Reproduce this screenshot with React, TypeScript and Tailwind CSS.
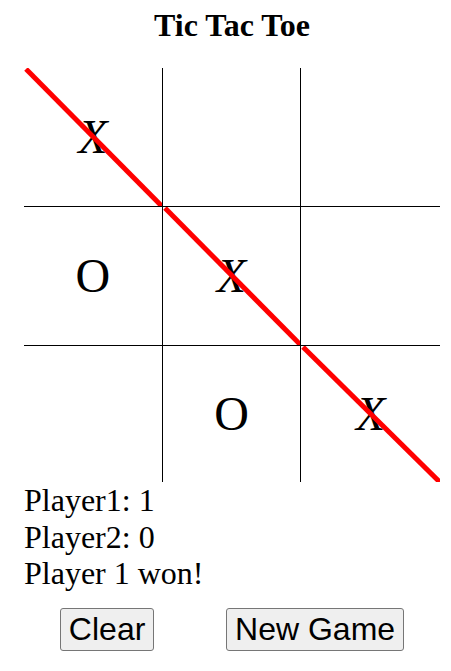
import React from "react";

const board = ["X", "", "", "O", "X", "", "", "O", "X"];
const winLine = [0, 4, 8];

function Cell({ value, index }: { value: string; index: number }) {
  const col = index % 3;
  const row = Math.floor(index / 3);
  const borders = [
    col < 2 ? "border-r border-black" : "",
    row < 2 ? "border-b border-black" : "",
  ].join(" ");
  return (
    <div className={`relative flex items-center justify-center ${borders}`}>
      <span className={`text-[48px] leading-none ${value === "X" ? "italic" : ""}`}>
        {value}
      </span>
      {winLine.includes(index) && (
        <svg className="absolute inset-0 h-full w-full" preserveAspectRatio="none">
          <line x1="2" y1="1" x2="100%" y2="100%" stroke="#ff0000" strokeWidth="5" />
        </svg>
      )}
    </div>
  );
}

export default function App() {
  return (
    <div className="min-h-[671px] bg-white text-black" style={{ fontFamily: '"Liberation Serif", "Times New Roman", serif' }}>
      <div className="ml-[24px] w-[416px] pt-[7px]">
        <h1 className="text-center text-[32px] font-bold leading-[1.15]">Tic Tac Toe</h1>
        <div className="mt-[24px] grid grid-cols-3 grid-rows-[139px_139px_136px]">
          {board.map((v, i) => (
            <Cell key={i} value={v} index={i} />
          ))}
        </div>
        <div className="text-[32px] leading-[1.15]">
          <div>Player1: 1</div>
          <div>Player2: 0</div>
          <div>Player 1 won!</div>
        </div>
        <div className="mt-[16px] flex justify-around">
          <button className="rounded-[3px] border border-[#767676] bg-[#efefef] px-[8px] py-[2px] text-[32px] leading-[1.15] font-['Liberation_Sans',Arial,sans-serif]">
            Clear
          </button>
          <button className="rounded-[3px] border border-[#767676] bg-[#efefef] px-[8px] py-[2px] text-[32px] leading-[1.15] font-['Liberation_Sans',Arial,sans-serif]">
            New Game
          </button>
        </div>
      </div>
    </div>
  );
}
